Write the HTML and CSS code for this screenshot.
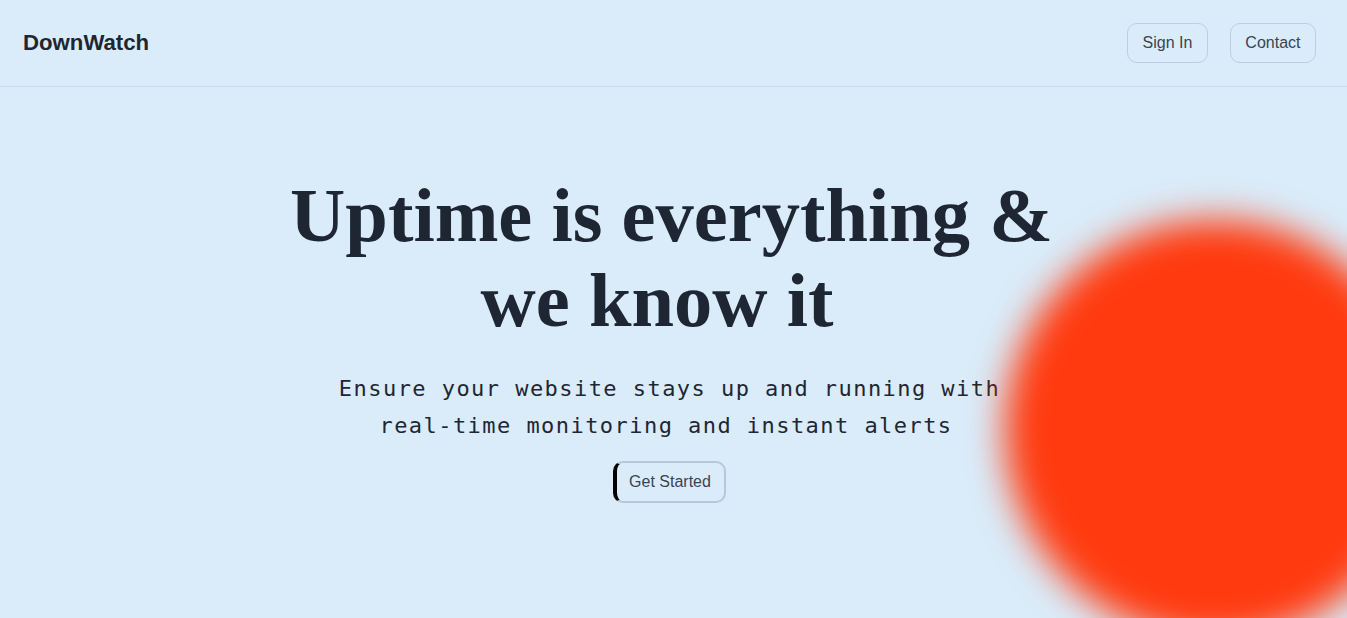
FILE: index.html
```html
<!DOCTYPE html>
<html lang="en">
<head>
<meta charset="utf-8">
<title>DownWatch</title>
<link rel="stylesheet" href="styles.css">
</head>
<body>
<div class="page">
  <header class="nav">
    <div class="logo">DownWatch</div>
    <nav class="nav-actions">
      <button class="btn">Sign In</button>
      <button class="btn">Contact</button>
    </nav>
  </header>
  <main class="hero">
    <h1 class="title"><span class="line line-1">Uptime is everything &amp;</span><span class="line line-2">we know it</span></h1>
    <p class="subtitle"><span class="line">Ensure your website stays up and running with</span><span class="line sub-2">real-time monitoring and instant alerts</span></p>
    <button class="cta">Get Started</button>
  </main>
  <div class="blob"></div>
</div>
</body>
</html>
```
FILE: styles.css
```css
html {
  overflow: hidden;
  background: #daecf9;
}
body {
  margin: 0;
  background: #daecf9;
  font-family: "Liberation Sans", Arial, sans-serif;
  color: #1f2633;
  overflow: hidden;
  height: 618px;
}
.page {
  position: relative;
  height: 614px;
}
.nav {
  height: 86px;
  display: flex;
  align-items: center;
  justify-content: space-between;
  padding: 0 31px 0 23px;
  border-bottom: 1px solid #cadded;
}
.logo {
  font-size: 22.2px;
  font-weight: 700;
  color: #1f2633;
}
.nav-actions {
  display: flex;
  gap: 22px;
}
.btn {
  font-family: "Liberation Sans", Arial, sans-serif;
  font-size: 16px;
  line-height: 18px;
  color: #3a4353;
  background: transparent;
  border: 1px solid #bccfdf;
  border-radius: 10px;
  padding: 10px 14.5px;
}
.hero {
  display: flex;
  flex-direction: column;
  align-items: center;
  text-align: center;
  padding: 86px 8px 0 0;
}
.line {
  display: block;
}
.title {
  margin: 0;
  font-family: "Liberation Serif", "Times New Roman", serif;
  font-weight: 700;
  font-size: 76.5px;
  line-height: 85px;
  color: #1f2633;
}
.line-1 {
  padding-left: 4px;
}
.line-2 {
  padding-right: 25px;
}
.subtitle {
  margin: 27px 0 0;
  font-family: "DejaVu Sans Mono", "Liberation Mono", monospace;
  font-size: 22px;
  letter-spacing: 1.45px;
  line-height: 37px;
  color: #1f2633;
}
.sub-2 {
  padding-right: 7px;
}
.cta {
  margin-top: 17px;
  font-family: "Liberation Sans", Arial, sans-serif;
  font-size: 16px;
  line-height: 18px;
  color: #3a4353;
  background: transparent;
  border: 2px solid #b6c8d7;
  border-left: 4px solid #000;
  border-radius: 10px;
  padding: 10px 13px 10px 12px;
}
.blob {
  position: absolute;
  left: 1005px;
  top: 220px;
  width: 420px;
  height: 420px;
  border-radius: 50%;
  background: #ff3a0f;
  filter: blur(18px);
}
```
